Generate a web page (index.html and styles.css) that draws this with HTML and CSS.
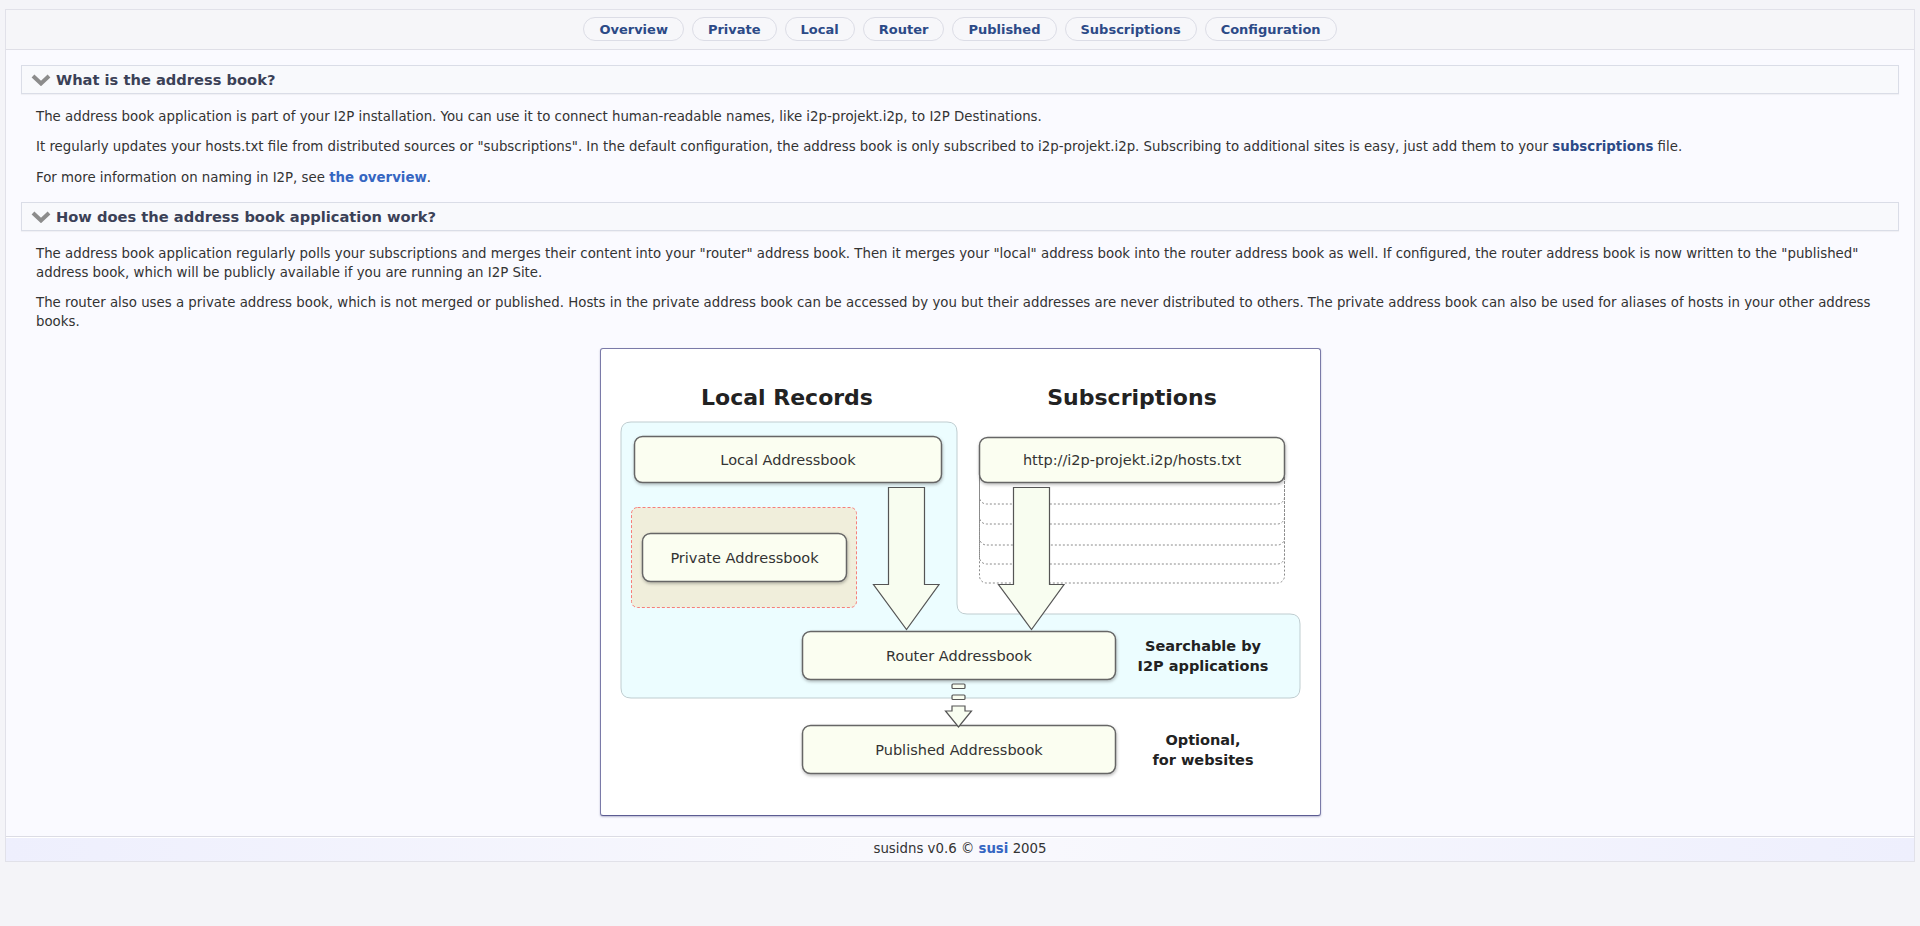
FILE: index.html
```html
<!DOCTYPE html>
<html lang="en">
<head>
<meta charset="utf-8">
<title>susidns - address book</title>
<link rel="stylesheet" href="styles.css">
</head>
<body>
<div class="page">
  <nav class="tabs">
    <a class="tab" href="#">Overview</a>
    <a class="tab" href="#">Private</a>
    <a class="tab" href="#">Local</a>
    <a class="tab" href="#">Router</a>
    <a class="tab" href="#">Published</a>
    <a class="tab" href="#">Subscriptions</a>
    <a class="tab" href="#">Configuration</a>
  </nav>
  <main class="content">
    <h3 class="sect-head first"><svg class="chev" width="20" height="12" viewBox="0 0 20 12"><polyline points="2,2 10,9.5 18,2" fill="none" stroke="#8c8c8c" stroke-width="4" stroke-linejoin="miter"/></svg>What is the address book?</h3>
    <p>The address book application is part of your I2P installation. You can use it to connect human-readable names, like i2p-projekt.i2p, to I2P Destinations.</p>
    <p>It regularly updates your hosts.txt file from distributed sources or "subscriptions". In the default configuration, the address book is only subscribed to i2p-projekt.i2p. Subscribing to additional sites is easy, just add them to your <a class="link-dark" href="#">subscriptions</a> file.</p>
    <p class="last">For more information on naming in I2P, see <a class="link" href="#">the overview</a>.</p>
    <h3 class="sect-head"><svg class="chev" width="20" height="12" viewBox="0 0 20 12"><polyline points="2,2 10,9.5 18,2" fill="none" stroke="#8c8c8c" stroke-width="4" stroke-linejoin="miter"/></svg>How does the address book application work?</h3>
    <p>The address book application regularly polls your subscriptions and merges their content into your "router" address book. Then it merges your "local" address book into the router address book as well. If configured, the router address book is now written to the "published" address book, which will be publicly available if you are running an I2P Site.</p>
    <p>The router also uses a private address book, which is not merged or published. Hosts in the private address book can be accessed by you but their addresses are never distributed to others. The private address book can also be used for aliases of hosts in your other address books.</p>
    <div class="diagram">
      <svg width="719" height="466" viewBox="0 0 719 466" font-family="DejaVu Sans, sans-serif">
        <defs>
          <filter id="sh" x="-10%" y="-20%" width="120%" height="150%">
            <feDropShadow dx="0.5" dy="1.5" stdDeviation="1.5" flood-color="#000" flood-opacity="0.28"/>
          </filter>
        </defs>
        <text x="186" y="56" text-anchor="middle" font-size="22" font-weight="bold" fill="#222">Local Records</text>
        <text x="531" y="56" text-anchor="middle" font-size="22" font-weight="bold" fill="#222">Subscriptions</text>

        <path d="M30,73 H346 Q356,73 356,83 V255 Q356,265 366,265 H689 Q699,265 699,275 V339 Q699,349 689,349 H30 Q20,349 20,339 V83 Q20,73 30,73 Z" fill="#ecfdff" stroke="#bfcdd0" stroke-width="1"/>

        <rect x="30.5" y="158.5" width="225" height="100" rx="6" fill="#f0eedb" stroke="#f77f7a" stroke-width="1" stroke-dasharray="3,2"/>

        <g fill="none" stroke="#8a8a8a" stroke-width="1" stroke-dasharray="2,2">
          <rect x="378.5" y="95.5" width="305" height="138.5" rx="7"/>
          <rect x="378.5" y="95.5" width="305" height="119.5" rx="7"/>
          <rect x="378.5" y="95.5" width="305" height="100.5" rx="7"/>
          <rect x="378.5" y="95.5" width="305" height="79.5" rx="7"/>
          <rect x="378.5" y="95.5" width="305" height="59.5" rx="7"/>
        </g>

        <g fill="#fbfef1" stroke="#666" stroke-width="1.5" filter="url(#sh)">
          <rect x="33.5" y="87.5" width="307" height="46" rx="8"/>
          <rect x="41.5" y="184.5" width="204" height="48" rx="8"/>
          <rect x="378.5" y="88.5" width="305" height="45" rx="8"/>
          <rect x="201.5" y="282.5" width="313" height="48" rx="8"/>
          <rect x="201.5" y="376.5" width="313" height="48" rx="8"/>
        </g>

        <g fill="#f8fdf0" stroke="#555" stroke-width="1.2" stroke-linejoin="miter">
          <path d="M287.5,138.5 H323.5 V235.5 H338 L305.5,280.5 L272.5,235.5 H287.5 Z"/>
          <path d="M412.5,138.5 H448.5 V235.5 H463 L430.5,280.5 L397.5,235.5 H412.5 Z"/>
          <rect x="351" y="335" width="13" height="4.5" rx="1"/>
          <rect x="351" y="346" width="13" height="4.5" rx="1"/>
          <path d="M351,357 H364 V362 H370.5 L357.5,378 L344.5,362 H351 Z"/>
        </g>

        <g font-size="14.5" fill="#333" text-anchor="middle" dominant-baseline="central">
          <text x="187" y="111">Local Addressbook</text>
          <text x="143.5" y="209">Private Addressbook</text>
          <text x="531" y="111">http://i2p-projekt.i2p/hosts.txt</text>
          <text x="358" y="307">Router Addressbook</text>
          <text x="358" y="401">Published Addressbook</text>
        </g>

        <g font-size="14.5" font-weight="bold" fill="#222" text-anchor="middle">
          <text x="602" y="302">Searchable by</text>
          <text x="602" y="322">I2P applications</text>
          <text x="602" y="396">Optional,</text>
          <text x="602" y="416">for websites</text>
        </g>
      </svg>
    </div>
  </main>
  <footer class="footer">susidns v0.6 © <a class="link" href="#">susi</a> 2005</footer>
</div>
</body>
</html>
```
FILE: styles.css
```css
html, body {
  margin: 0;
  padding: 0;
}

body {
  background: #f4f4f8;
  font-family: "DejaVu Sans", "Noto Sans", sans-serif;
  font-size: 13.33px;
  color: #333;
  padding-top: 9px;
}

.page {
  margin: 0 5px;
  border: 1px solid #e1e1e9;
  background: #fafaff;
}

.tabs {
  display: flex;
  justify-content: center;
  gap: 8px;
  padding: 7px 0 8px;
  background: #f6f6f9;
  border-bottom: 1px solid #dfdfe7;
}

.tab {
  display: block;
  box-sizing: border-box;
  height: 24px;
  line-height: 23px;
  padding: 0 15px;
  border: 1px solid #dcdde6;
  border-radius: 12px;
  background: #f7f7fa;
  color: #2c4a87;
  font-weight: bold;
  font-size: 13px;
  text-decoration: none;
}

.content {
  padding: 15px 15px 20px;
}

.sect-head {
  display: flex;
  align-items: center;
  gap: 5px;
  box-sizing: border-box;
  height: 29px;
  margin: 15px 0 13px;
  padding-left: 9px;
  border: 1px solid #dadde7;
  background: #f8f9fc;
  box-shadow: 0 1px 1px rgba(0, 0, 0, 0.04);
  font-size: 14.67px;
  font-weight: bold;
  color: #3b4157;
}

.sect-head.first {
  margin-top: 0;
}

.chev {
  display: block;
  flex: none;
}

.content p {
  margin: 0 0 11px;
  padding: 0 15px;
  line-height: 19px;
}

.content p.last {
  margin-top: 12px;
}

.link {
  color: #3566c2;
  font-weight: bold;
  text-decoration: none;
}

.link-dark {
  color: #2c4a87;
  font-weight: bold;
  text-decoration: none;
}

.diagram {
  box-sizing: border-box;
  width: 721px;
  height: 468px;
  margin: 17px auto 0;
  border: 1px solid #7a7aa8;
  border-bottom-color: #5c5c92;
  border-radius: 3px;
  background: #fff;
  box-shadow: 0 1px 2px rgba(60, 60, 120, 0.35);
}

.diagram svg {
  display: block;
}

.footer {
  border-top: 1px solid #dcdce4;
  padding: 4px 0;
  line-height: 16px;
  text-align: center;
  color: #333;
  background: linear-gradient(to right, #eeeffd, #f9f9fd 50%, #eeeffd);
  box-shadow: inset 0 1px 0 #fff;
}
```
